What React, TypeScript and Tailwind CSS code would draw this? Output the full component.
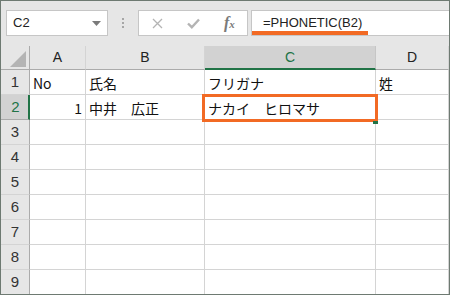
const cols = ['A', 'B', 'C', 'D'];

const data: Record<number, { text: string; right?: boolean }[]> = {
  1: [{ text: 'No' }, { text: '氏名' }, { text: 'フリガナ' }, { text: '姓' }],
  2: [{ text: '1', right: true }, { text: '中井　広正' }, { text: 'ナカイ　ヒロマサ' }, { text: '' }],
};

const cellFont = { fontFamily: '"Noto Sans CJK JP", "Liberation Sans", sans-serif' };

function Toolbar() {
  return (
    <div className="flex h-[45px] items-start bg-[#e6e6e6] pt-[9px]">
      {/* name box */}
      <div className="ml-[5px] flex h-[26px] w-[102px] items-center justify-between border border-[#c6c6c6] bg-white pl-[6px] pr-[6px]">
        <span className="text-[13px] text-[#222]" style={{ fontFamily: '"Liberation Sans", sans-serif' }}>
          C2
        </span>
        <svg width="9" height="5" viewBox="0 0 9 5">
          <path d="M0 0 H9 L4.5 5 Z" fill="#7a7a7a" />
        </svg>
      </div>
      {/* separator dots */}
      <div className="flex h-[26px] w-[30px] flex-col items-center justify-center gap-[2px]">
        <span className="h-[2px] w-[2px] bg-[#a6a6a6]" />
        <span className="h-[2px] w-[2px] bg-[#a6a6a6]" />
        <span className="h-[2px] w-[2px] bg-[#a6a6a6]" />
      </div>
      {/* cancel / enter / fx */}
      <div className="relative h-[26px] w-[110px] border border-[#c6c6c6] bg-white">
        <svg className="absolute left-[13px] top-[7px]" width="11" height="11" viewBox="0 0 11 11">
          <path d="M1 1 L10 10 M10 1 L1 10" stroke="#b4b4b4" strokeWidth="1.3" fill="none" />
        </svg>
        <svg className="absolute left-[48px] top-[7px]" width="13" height="11" viewBox="0 0 13 11">
          <path d="M1 5.5 L4.8 9.2 L12 1.5" stroke="#b4b4b4" strokeWidth="2.4" fill="none" />
        </svg>
        <span
          className="absolute left-[85px] top-[2px] text-[16px] font-bold italic leading-[20px] text-[#7a7a7a]"
          style={{ fontFamily: '"Liberation Serif", serif' }}
        >
          f<span className="text-[11px]">x</span>
        </span>
      </div>
      {/* formula bar */}
      <div className="relative ml-[3px] h-[26px] flex-1 border-y border-l border-[#c6c6c6] bg-white">
        <span
          className="absolute left-[11px] top-[4px] text-[13px] leading-[16px] text-[#222]"
          style={{ fontFamily: '"Liberation Sans", sans-serif' }}
        >
          =PHONETIC(B2)
        </span>
        <div className="absolute left-0 top-[20px] h-[4px] w-[116px] bg-[#f26a24]" />
      </div>
    </div>
  );
}

function HeaderRow() {
  return (
    <div className="grid h-[24px] grid-cols-[29px_56px_119px_171px_73px]">
      <div className="relative border-b border-r border-[#ababab] bg-[#e6e6e6]">
        <svg className="absolute bottom-[2px] right-[3px]" width="16" height="16" viewBox="0 0 16 16">
          <path d="M16 0 V16 H0 Z" fill="#b4b4b4" />
        </svg>
      </div>
      {cols.map((c) =>
        c === 'C' ? (
          <div
            key={c}
            className="flex items-center justify-center border-b-2 border-r border-b-[#217346] border-r-[#c6c6c6] bg-[#d2d2d2] pt-[1px] text-[14px] text-[#217346]"
            style={{ fontFamily: '"Liberation Sans", sans-serif' }}
          >
            {c}
          </div>
        ) : (
          <div
            key={c}
            className="flex items-center justify-center border-b border-r border-b-[#ababab] border-r-[#d4d4d4] bg-[#e6e6e6] text-[14px] text-[#222]"
            style={{ fontFamily: '"Liberation Sans", sans-serif' }}
          >
            {c}
          </div>
        )
      )}
    </div>
  );
}

function Row({ n }: { n: number }) {
  const cells = data[n] ?? [{ text: '' }, { text: '' }, { text: '' }, { text: '' }];
  const selected = n === 2;
  return (
    <div className="grid h-[25px] grid-cols-[29px_56px_119px_171px_73px]">
      <div
        className={
          selected
            ? 'flex items-center justify-center border-b border-r-2 border-b-[#ababab] border-r-[#217346] bg-[#d2d2d2] pl-[2px] text-[15px] text-[#217346]'
            : 'flex items-center justify-center border-b border-r border-b-[#d4d4d4] border-r-[#ababab] bg-[#e6e6e6] text-[15px] text-[#333]'
        }
        style={{ fontFamily: '"Liberation Sans", sans-serif' }}
      >
        {n}
      </div>
      {cells.map((cell, i) => (
        <div
          key={i}
          className={
            'flex items-center overflow-hidden whitespace-nowrap border-b border-r border-[#d4d4d4] bg-white px-[3px] pt-[2px] text-[14px] text-[#111] ' +
            (cell.right ? 'justify-end' : 'justify-start')
          }
          style={cellFont}
        >
          {cell.text}
        </div>
      ))}
    </div>
  );
}

export default function App() {
  const rows = [1, 2, 3, 4, 5, 6, 7, 8, 9];
  return (
    <div className="h-[295px] w-[450px] overflow-hidden border border-[#6e7a72] bg-white">
      <Toolbar />
      <div className="relative">
        <HeaderRow />
        {rows.map((n) => (
          <Row key={n} n={n} />
        ))}
        {/* highlight around C2 */}
        <div className="absolute left-[201px] top-[48px] h-[28px] w-[176px] border-[3px] border-[#f26a24]" />
        <div className="absolute left-[372px] top-[75px] h-[3px] w-[5px] bg-[#217346]" />
      </div>
    </div>
  );
}
